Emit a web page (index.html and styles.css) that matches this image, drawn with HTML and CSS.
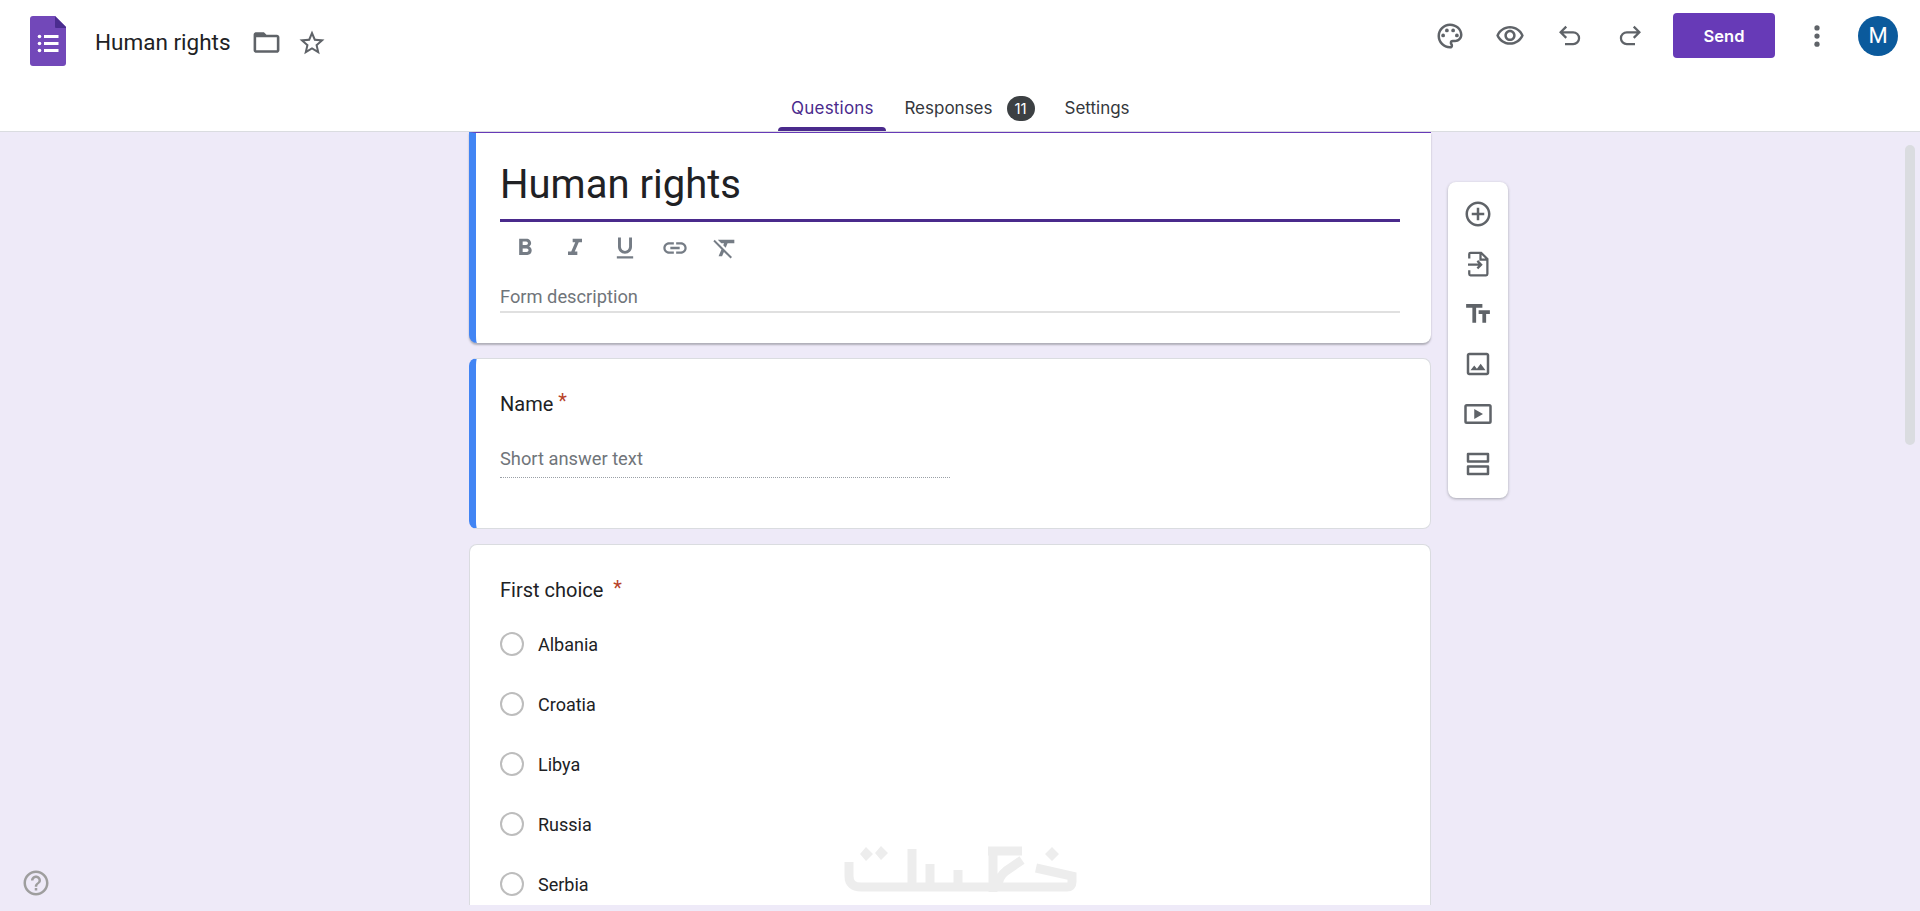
FILE: index.html
```html
<!DOCTYPE html>
<html lang="en">
<head>
<meta charset="utf-8">
<title>Human rights</title>
<link rel="stylesheet" href="styles.css">
</head>
<body>
<header class="header">
  <div class="top-row">
    <svg class="logo" viewBox="0 0 36 50"><path d="M3 0h22l11 11v36a3 3 0 0 1-3 3H3a3 3 0 0 1-3-3V3a3 3 0 0 1 3-3z" fill="#7248b9"/><path d="M25 0l11 11v1H26a1 1 0 0 1-1-1z" fill="#4a2c8f"/><g fill="#fff"><circle cx="9.5" cy="20.5" r="1.8"/><circle cx="9.5" cy="27.5" r="1.8"/><circle cx="9.5" cy="34.5" r="1.8"/><rect x="14" y="19" width="14.5" height="3"/><rect x="14" y="26" width="14.5" height="3"/><rect x="14" y="33" width="14.5" height="3"/></g></svg>
    <div class="doc-title">Human rights</div>
    <svg class="ic folder" viewBox="0 0 24 24"><path d="M20 6h-8l-2-2H4c-1.1 0-1.99.9-1.99 2L2 18c0 1.1.9 2 2 2h16c1.1 0 2-.9 2-2V8c0-1.1-.9-2-2-2zm0 12H4V8h16v10z"/></svg>
    <svg class="ic star" viewBox="0 0 24 24"><path d="M22 9.24l-7.19-.62L12 2 9.19 8.63 2 9.24l5.46 4.73L5.82 21 12 17.27 18.18 21l-1.63-7.03L22 9.24zM12 15.4l-3.76 2.27 1-4.28-3.32-2.88 4.38-.38L12 6.1l1.71 4.04 4.38.38-3.32 2.88 1 4.28L12 15.4z"/></svg>
    <div class="actions">
      <svg class="ic" viewBox="0 0 24 24"><path d="M12 22C6.49 22 2 17.51 2 12S6.49 2 12 2s10 4.04 10 9c0 3.31-2.69 6-6 6h-1.77c-.28 0-.5.22-.5.5 0 .12.05.23.13.33.41.47.64 1.06.64 1.67A2.5 2.5 0 0 1 12 22zm0-18c-4.41 0-8 3.59-8 8s3.59 8 8 8c.28 0 .5-.22.5-.5a.54.54 0 0 0-.14-.35c-.41-.46-.63-1.05-.63-1.65a2.5 2.5 0 0 1 2.5-2.5H16c2.21 0 4-1.79 4-4 0-3.86-3.59-7-8-7z"/><circle cx="6.5" cy="11.5" r="1.5"/><circle cx="9.5" cy="7.5" r="1.5"/><circle cx="14.5" cy="7.5" r="1.5"/><circle cx="17.5" cy="11.5" r="1.5"/></svg>
      <svg class="ic" viewBox="0 0 24 24"><path d="M12 6c3.79 0 7.17 2.13 8.82 5.5C19.17 14.87 15.79 17 12 17s-7.17-2.13-8.82-5.5C4.83 8.13 8.21 6 12 6m0-2C7 4 2.73 7.11 1 11.5 2.73 15.89 7 19 12 19s9.27-3.11 11-7.5C21.27 7.11 17 4 12 4zm0 5c1.38 0 2.5 1.12 2.5 2.5S13.38 14 12 14s-2.5-1.12-2.5-2.5S10.62 9 12 9m0-2c-2.48 0-4.5 2.02-4.5 4.5S9.52 16 12 16s4.5-2.02 4.5-4.5S14.48 7 12 7z"/></svg>
      <svg class="ic" viewBox="0 0 24 24"><path class="ln" d="M9 4.500L4.500 9 9 13.500M4.500 9H14.500a4.750 4.750 0 0 1 0 9.500H8"/></svg>
      <svg class="ic" viewBox="0 0 24 24"><path class="ln" d="M15 4.500L19.500 9 15 13.500M19.500 9H9.500a4.750 4.750 0 0 0 0 9.500H16"/></svg>
      <div class="send">Send</div>
      <svg class="ic more" viewBox="0 0 24 24"><circle cx="12" cy="5.500" r="2.100"/><circle cx="12" cy="12" r="2.100"/><circle cx="12" cy="18.500" r="2.100"/></svg>
      <div class="avatar">M</div>
    </div>
  </div>
  <nav class="tabs">
    <div class="tab active">Questions</div>
    <div class="tab">Responses<span class="badge">11</span></div>
    <div class="tab">Settings</div>
  </nav>
</header>
<main class="main">
  <div class="column">
    <section class="card card-title">
      <div class="form-title">Human rights</div>
      <div class="format-bar">
        <svg viewBox="0 0 24 24"><path d="M15.600 10.790c.97-.67 1.650-1.770 1.650-2.790 0-2.260-1.750-4-4-4H7v14h7.040c2.090 0 3.710-1.700 3.710-3.790 0-1.520-.86-2.820-2.150-3.420zM10 6.500h3c.83 0 1.500.67 1.500 1.500s-.67 1.500-1.500 1.500h-3v-3zm3.500 9H10v-3h3.500c.83 0 1.500.67 1.500 1.500s-.67 1.500-1.500 1.500z"/></svg>
        <svg viewBox="0 0 24 24"><path d="M10 4v3h2.210l-3.420 8H6v3h8v-3h-2.210l3.420-8H18V4z"/></svg>
        <svg viewBox="0 0 24 24"><path d="M12 17c3.310 0 6-2.690 6-6V3h-2.500v8c0 1.930-1.570 3.500-3.500 3.500S8.500 12.930 8.500 11V3H6v8c0 3.310 2.690 6 6 6zm-7 2v2h14v-2H5z"/></svg>
        <svg viewBox="0 0 24 24"><path d="M3.900 12c0-1.710 1.390-3.100 3.100-3.100h4V7H7c-2.760 0-5 2.240-5 5s2.240 5 5 5h4v-1.900H7c-1.710 0-3.100-1.390-3.100-3.100zM8 13h8v-2H8v2zm9-6h-4v1.900h4c1.710 0 3.100 1.390 3.100 3.100s-1.390 3.100-3.100 3.100h-4V17h4c2.760 0 5-2.240 5-5s-2.240-5-5-5z"/></svg>
        <svg viewBox="0 0 24 24"><path d="M3.270 5L2 6.270l6.970 6.970L6.500 19h3l1.570-3.660L16.730 21 18 19.730 3.550 5.270 3.270 5zM6 5v.18L8.820 8h2.400l-.72 1.680 2.100 2.100L14.210 8H20V5H6z"/></svg>
      </div>
      <div class="form-desc">Form description</div>
    </section>
    <section class="card card-name">
      <div class="question">Name<span class="req name-req">*</span></div>
      <div class="short-answer">Short answer text</div>
    </section>
    <section class="card card-choice">
      <div class="question">First choice<span class="req">*</span></div>
      <div class="option"><span class="radio"></span>Albania</div>
      <div class="option"><span class="radio"></span>Croatia</div>
      <div class="option"><span class="radio"></span>Libya</div>
      <div class="option"><span class="radio"></span>Russia</div>
      <div class="option"><span class="radio"></span>Serbia</div>
    </section>
  </div>
  <aside class="toolbar">
    <svg viewBox="0 0 24 24"><path d="M13 7h-2v4H7v2h4v4h2v-4h4v-2h-4V7zm-1-5C6.480 2 2 6.480 2 12s4.480 10 10 10 10-4.480 10-10S17.520 2 12 2zm0 18c-4.410 0-8-3.590-8-8s3.590-8 8-8 8 3.590 8 8-3.590 8-8 8z"/></svg>
    <svg viewBox="0 0 24 24"><path class="ln" d="M5 7.500V4a1 1 0 0 1 1-1h8.500L19.500 8v12a1 1 0 0 1-1 1H6a1 1 0 0 1-1-1v-3M14 3v5.500h5.500M4 12.500h10.500M11.500 9.500l3 3-3 3"/></svg>
    <svg viewBox="0 0 24 24"><path d="M2.500 4v3h5v12h3V7h5V4h-13zm19 5h-9v3h3v7h3v-7h3V9z"/></svg>
    <svg viewBox="0 0 24 24"><path d="M19 5v14H5V5h14m0-2H5c-1.100 0-2 .9-2 2v14c0 1.100.9 2 2 2h14c1.100 0 2-.9 2-2V5c0-1.100-.9-2-2-2zm-4.860 8.860l-3 3.870L9 13.140 6 17h12l-3.860-5.140z"/></svg>
    <svg viewBox="0 0 24 24"><path d="M21 4H3a2 2 0 0 0-2 2v12a2 2 0 0 0 2 2h18a2 2 0 0 0 2-2V6a2 2 0 0 0-2-2zm0 14H3V6h18zM9 8v8l7-4z"/></svg>
    <svg viewBox="0 0 24 24"><path d="M4 3h16a1 1 0 0 1 1 1v6a1 1 0 0 1-1 1H4a1 1 0 0 1-1-1V4a1 1 0 0 1 1-1zm1 2v4h14V5zM4 13h16a1 1 0 0 1 1 1v6a1 1 0 0 1-1 1H4a1 1 0 0 1-1-1v-6a1 1 0 0 1 1-1zm1 2v4h14v-4z"/></svg>
  </aside>
  <div class="scrollbar"></div>
  <svg class="help" viewBox="0 0 24 24"><path d="M11 18h2v-2h-2v2zm1-16C6.480 2 2 6.480 2 12s4.480 10 10 10 10-4.480 10-10S17.520 2 12 2zm0 18c-4.410 0-8-3.590-8-8s3.590-8 8-8 8 3.590 8 8-3.590 8-8 8zm0-14c-2.210 0-4 1.790-4 4h2c0-1.100.9-2 2-2s2 .9 2 2c0 2-3 1.750-3 5h2c0-2.250 3-2.500 3-5 0-2.210-1.790-4-4-4z"/></svg>
  <svg class="watermark" viewBox="0 0 240 60"><g fill="none" stroke="#ededed" stroke-width="9"><path d="M9 22v14q0 11 12 11h47"/><path d="M72 9v42"/><path d="M68 47h87M90 24v23M118 30v17"/><path d="M148 11h34M153 11v41M182 20l-16 11q-8 6-8 16"/><path d="M155 47h72q5 0 5-5v-6l-36-8"/></g><path class="wm-dot" d="M20 14l6-7 7 7-7 7zM35 13l6-7 7 7-7 7zM205 14l7-7 7 7-7 7z"/></svg>
</main>
</body>
</html>
```
FILE: styles.css
```css
* { box-sizing: border-box; }
html, body { margin: 0; height: 100%; overflow: hidden; }
body { font-family: Roboto, "Noto Sans", sans-serif; color: #202124; background: #eeeaf8; display: flex; flex-direction: column; }

.header { height: 132px; background: #fff; border-bottom: 1px solid #dadce0; flex: none; display: flex; flex-direction: column; }
.top-row { height: 82px; flex: none; display: flex; align-items: center; padding-left: 30px; padding-right: 22px; }
.logo { width: 36px; height: 50px; flex: none; }
.doc-title { font-size: 22.5px; margin-left: 29px; margin-top: 2px; color: #202124; }
.ic { width: 30px; height: 30px; fill: #5f6368; flex: none; }
.folder { width: 31px; height: 31px; margin-left: 20px; margin-top: 3px; }
.star { margin-left: 15px; margin-top: 3px; }
.actions { margin-left: auto; margin-bottom: 11px; display: flex; align-items: center; }
.actions .ic { margin-right: 30px; }
.ln { fill: none; stroke: #5f6368; stroke-width: 1.8; }
.send { width: 102px; height: 45px; margin-left: -2px; background: #673ab7; color: #fff; border-radius: 4px; font-family: Inter, Roboto, sans-serif; font-weight: 600; font-size: 16.5px; display: flex; align-items: center; justify-content: center; }
.actions .more { margin-left: 27px; margin-right: 26px; }
.avatar { width: 40px; height: 40px; border-radius: 50%; background: #0b5a9c; color: #fff; font-size: 22px; display: flex; align-items: center; justify-content: center; }

.tabs { flex: 1; display: flex; justify-content: center; align-items: flex-end; gap: 6px; }
.tab { padding: 0 12px 3px; font-family: Inter, Roboto, sans-serif; font-size: 17px; color: #34373c; display: flex; align-items: center; height: 43px; position: relative; }
.tab.active { color: #4a2a8c; width: 108px; padding-left: 0; padding-right: 0; justify-content: center; letter-spacing: .2px; }
.tab.active::after { content: ""; position: absolute; left: 0; right: 0; bottom: 0; height: 4px; background: #4a2a8c; border-radius: 4px 4px 0 0; }
.badge { margin-left: 14px; width: 28px; height: 25px; border-radius: 13px; background: #3c4043; color: #fff; font-size: 15px; display: flex; align-items: center; justify-content: center; }

.main { flex: 1; min-height: 0; position: relative; display: flex; overflow: hidden; padding-left: 469px; padding-bottom: 6px; }
.column { width: 962px; display: flex; flex-direction: column; gap: 15px; flex: none; }
.card { background: #fff; border: 1px solid #dadce0; border-radius: 8px; padding-left: 30px; padding-right: 30px; position: relative; flex: none; }
.card-title { height: 211px; border: none; border-radius: 0 0 8px 8px; box-shadow: 0 2px 2px rgba(60,64,67,.35); border-left: 7px solid #4285f4; padding-left: 24px; padding-top: 29px; border-top: 1px solid #673ab7; }
.form-title { font-size: 40px; line-height: 46px; border-bottom: 3px solid #4a2a8c; height: 60px; margin-right: 1px; }
.format-bar { display: flex; gap: 22px; padding-left: 11px; margin-top: 12px; }
.format-bar svg { width: 28px; height: 28px; fill: #757c85; }
.form-desc { margin-top: 25px; font-size: 18.3px; color: #70757a; padding-bottom: 4px; border-bottom: 2px solid #e0e0e0; margin-right: 1px; line-height: 20px; }

.card-name { height: 171px; border-left: 7px solid #4285f4; padding-left: 24px; padding-top: 33px; }
.question { font-size: 20px; line-height: 24px; color: #202124; }
.req { color: #b8432a; margin-left: 10px; font-size: 20px; position: relative; top: -2px; }
.name-req { margin-left: 5px; top: -3px; }
.short-answer { margin-top: 32px; width: 450px; font-size: 18.3px; color: #70757a; line-height: 22px; padding-bottom: 7px; border-bottom: 1px dotted #9aa0a6; }

.card-choice { flex: 1; min-height: 0; overflow: hidden; padding-top: 33px; border-bottom: none; border-radius: 8px 8px 0 0; }
.option { display: flex; align-items: center; height: 60px; font-size: 18px; color: #202124; gap: 14px; }
.card-choice .question { margin-bottom: 12px; }
.radio { width: 24px; height: 24px; border: 2px solid #bdbdbd; border-radius: 50%; flex: none; }

.toolbar { margin-left: 17px; margin-top: 50px; width: 60px; height: 316px; flex: none; background: #fff; border-radius: 8px; box-shadow: 0 1px 3px rgba(60,64,67,.4); display: flex; flex-direction: column; align-items: center; gap: 20px; padding-top: 17px; }
.toolbar svg { width: 30px; height: 30px; flex: none; fill: #5f6368; }

.scrollbar { position: absolute; right: 5px; top: 13px; width: 10px; height: 300px; border-radius: 5px; background: #dadce0; }
.help { position: absolute; left: 21px; bottom: 13px; width: 30px; height: 30px; fill: #9e9e9e; }
.watermark { position: absolute; left: 840px; bottom: 11px; width: 240px; height: 60px; }
.wm-dot { fill: #ededed; }
```
